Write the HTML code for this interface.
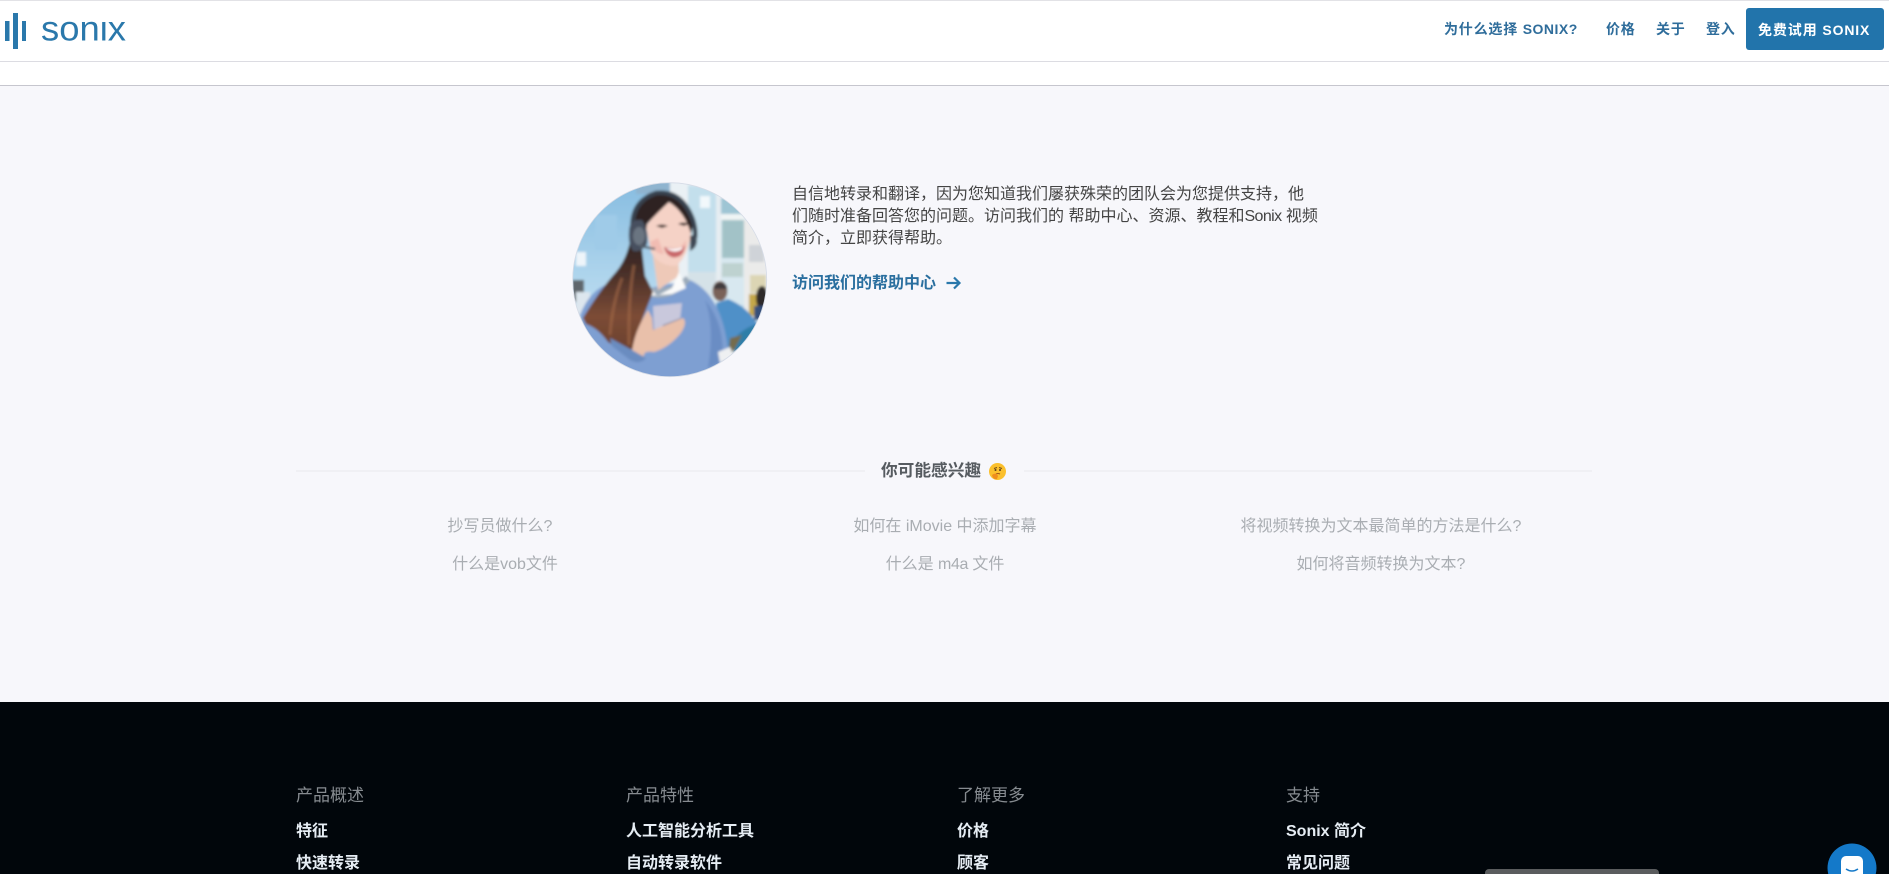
<!DOCTYPE html>
<html lang="zh">
<head>
<meta charset="utf-8">
<title>Sonix</title>
<style>
html,body{margin:0;padding:0;width:1889px;height:874px;overflow:hidden;background:#f7f7fb}
body{position:relative;font-family:"Liberation Sans","Noto Sans CJK SC",sans-serif}
.a{position:absolute;white-space:nowrap;line-height:22px}
.c{transform:translateX(-50%)}
.nav{color:#2f6d9b;font-weight:700;font-size:14px;top:18px;letter-spacing:.8px}
.n{letter-spacing:.5px}
.p{color:#444;font-size:16px;left:792px}
.q{color:#a9adb2;font-size:16px}
.fh{color:#868b90;font-size:17px;top:785px}
.fl{color:#e6edf4;font-weight:700;font-size:16px}
</style>
</head>
<body>
<!-- header -->
<div class="a" style="left:0;top:0;width:1889px;height:85px;background:#fff;border-top:1px solid #e2e2e6;box-sizing:border-box"></div>
<div class="a" style="left:0;top:61px;width:1889px;height:1px;background:#dcdce2"></div>
<div class="a" style="left:0;top:85px;width:1889px;height:1px;background:#c6c6ce"></div>

<svg class="a" style="left:0;top:0" width="140" height="60" viewBox="0 0 140 60">
  <text x="41" y="40.500" font-family="Liberation Sans" font-size="35" fill="#2a78ab" textLength="85" lengthAdjust="spacingAndGlyphs">sonix</text>
  <rect x="30" y="2" width="105" height="19.500" fill="#fff"/>
  <rect x="5" y="21" width="4.500" height="20" fill="#2a78ab"/>
  <rect x="13" y="13" width="5" height="36" fill="#2a78ab"/>
  <rect x="22" y="21" width="4" height="20" fill="#2a78ab"/>
</svg>

<span class="a nav" style="left:1444px">为什么选择 <span class="n">SONIX?</span></span>
<span class="a nav" style="left:1606px">价格</span>
<span class="a nav" style="left:1656px">关于</span>
<span class="a nav" style="left:1706px">登入</span>
<div class="a" style="left:1746px;top:8px;width:138px;height:42px;background:#2274ab;border-radius:3px"></div>
<span class="a" style="left:1758px;top:19px;color:#fff;font-weight:700;font-size:14px;letter-spacing:.9px">免费试用 <span style="letter-spacing:.85px">SONIX</span></span>

<!-- photo -->
<svg class="a" style="left:550px;top:160px" width="240" height="240" viewBox="0 0 240 240">
  <defs>
    <clipPath id="cp"><circle cx="119.7" cy="119.7" r="97"/></clipPath>
    <filter id="b" x="-10%" y="-10%" width="120%" height="120%"><feGaussianBlur stdDeviation="1.300"/></filter>
    <linearGradient id="w" x1="0" y1="0" x2="0" y2="1"><stop offset="0" stop-color="#86bce0"/><stop offset=".55" stop-color="#b4d8ee"/><stop offset=".8" stop-color="#d8e7f0"/></linearGradient>
    <linearGradient id="h" x1="0" y1="0" x2="0" y2="1"><stop offset="0" stop-color="#2a2120"/><stop offset=".35" stop-color="#4a3029"/><stop offset=".7" stop-color="#7c4c36"/><stop offset="1" stop-color="#6a3f2d"/></linearGradient>
  </defs>
  <g clip-path="url(#cp)"><g filter="url(#b)">
    <rect x="20" y="20" width="200" height="200" fill="url(#w)"/>
    <rect x="86" y="22" width="34" height="12" fill="#8fb4cf"/>
    <rect x="45" y="55" width="22" height="35" fill="#9fcbe8"/>
    <rect x="26" y="92" width="10" height="14" fill="#eef5fa"/>
    <!-- right of head -->
    <rect x="120" y="20" width="100" height="125" fill="#d8e8f0"/>
    <rect x="120" y="22" width="18" height="110" fill="#eaf1f5"/>
    <rect x="138" y="26" width="28" height="90" fill="#c3dfec"/>
    <rect x="150" y="36" width="10" height="12" fill="#f2f8fb"/>
    <rect x="138" y="112" width="34" height="25" fill="#d5e2e8"/>
    <rect x="166" y="22" width="5" height="115" fill="#e6edf2"/>
    <rect x="171" y="38" width="22" height="16" fill="#9ec5d4"/>
    <rect x="171" y="54" width="24" height="6" fill="#f0f4f5"/>
    <rect x="172" y="60" width="22" height="38" fill="#a2c2c7"/>
    <rect x="172" y="103" width="21" height="14" fill="#bed2d0"/>
    <rect x="194" y="60" width="26" height="100" fill="#ebebea"/>
    <rect x="199" y="85" width="15" height="17" fill="#cfd3d8"/>
    <rect x="200" y="115" width="16" height="18" fill="#dcd5b4"/>
    <rect x="199" y="134" width="10" height="22" fill="#c5a84a"/>
    <path d="M22 120h12v22h-12z" fill="#5f666c"/>
    <path d="M26 132h14v22h-14z" fill="#dde6ee"/>
    <!-- background man -->
    <ellipse cx="170" cy="131" rx="7.500" ry="10" fill="#7a6258"/>
    <path d="M164 126q6-7 13 0l0 3h-13z" fill="#3f3a3c"/>
    <path d="M166 143l12-4q20 8 30 26l-12 6-10 10-6 10-8-8z" fill="#4f90c8"/>
    <path d="M183 180q10-12 24-16l3 30-24 10z" fill="#2f7ea8"/>
    <ellipse cx="212" cy="138" rx="6" ry="12" fill="#2e2a2c"/>
    <path d="M204 146h14v14h-14z" fill="#35507a"/>
    <path d="M180 178l12-3-8 15-6 8z" fill="#746c4e"/>
    <!-- sweater -->
    <path d="M30 155Q40 130 58 124L100 128L140 120Q172 135 178 190L182 205L150 220L90 222L60 200L34 172Z" fill="#7e9fd2"/>
    <path d="M93 134Q118 146 140 121L136 116Q120 132 96 127Z" fill="#9cabba"/>
    <path d="M155 140Q165 165 158 208l14-6Q176 165 155 140Z" fill="#6a8dc4"/>
    <!-- neck/collar -->
    <path d="M103 96L128 92L129 116L108 130Z" fill="#eec9b8"/>
    <path d="M93 118L107 136L122 128L129 112L136 128L122 134L97 136Z" fill="#fbfbfb"/>
    <!-- hair -->
    <path d="M82 72Q78 98 66 112Q50 130 33 158L36 164Q48 168 58 182L76 192L88 186L92 160L103 132L95 116L92 90Z" fill="url(#h)"/>
    <path d="M72 118Q62 145 60 175M84 105Q78 140 79 185" stroke="#a56b48" stroke-width="3" fill="none" opacity=".6"/>
    <!-- face -->
    <path d="M96 66Q108 50 118 42Q135 48 141 72Q139 95 126 106Q108 106 101 92Z" fill="#f5d2c6"/>
    <path d="M100 82q4 12 14 12l-6-16zM136 80l-6 8 6-1z" fill="#eeb0a8" opacity=".65"/>
    <path d="M84 74Q82 38 112 33Q136 33 143 64L141 74Q135 52 119 42Q108 52 97 64L95 80L92 80Z" fill="#2e2422"/>
    <path d="M106 66q6-3 12 0l-6 2zM128 64q5-3 11 0l-5 2z" fill="#4a3a36"/>
    <path d="M114 87q12 3 21-1q-1 11-11 11.500q-8-1-10-10.500z" fill="#c9686a"/>
    <path d="M116 88q8 2 17-1q-1 4-8 4.500q-6-.5-9-3.500z" fill="#fff"/>
    <!-- headset -->
    <path d="M83 74Q79 42 106 33Q132 30 143 60Q146 70 145 78" fill="none" stroke="#394250" stroke-width="4.500"/>
    <path d="M79 72q0-11 8-12l5 0q7 10 5 24q-6 9-14 7q-5-7-4-19z" fill="#47505e"/>
    <ellipse cx="89" cy="76" rx="6" ry="9" fill="#6b7581"/>
    <path d="M140 76q6-3 7 4q0 8-7 11z" fill="#3f4855"/>
    <path d="M90 86l15 3" stroke="#56606b" stroke-width="2.200"/>
    <!-- phone + hand -->
    <path d="M103 146l29-3l-2 18l-17 7l-9 1z" fill="#c9c8dc"/>
    <path d="M113 166l18-7" stroke="#6a7a9c" stroke-width="2"/>
    <path d="M82 192Q84 172 98 150l4 8l1 12l30-12q5 5-3 16q-12 14-26 18Q92 190 94 198Q86 200 82 192Z" fill="#e9c0aa"/>
    <path d="M60 178L82 190L96 198Q90 205 80 200L62 186Z" fill="#6a8cc0"/>
    <path d="M168 192l12-5l4 10l-14 6z" fill="#eef0f2"/>
  </g></g>
  <circle cx="119.7" cy="119.7" r="97" fill="none" stroke="#d5dbe6" stroke-width=".8"/>
</svg>

<!-- paragraph -->
<span class="a p" style="top:184px">自信地转录和翻译，因为您知道我们屡获殊荣的团队会为您提供支持，他</span>
<span class="a p" style="top:206px">们随时准备回答您的问题。访问我们的 帮助中心、资源、教程和<span style="letter-spacing:-.6px">Sonix</span> 视频</span>
<span class="a p" style="top:228px">简介，立即获得帮助。</span>
<span class="a" style="left:792px;top:273px;color:#2a6f9f;font-weight:700;font-size:16px">访问我们的帮助中心</span>
<svg class="a" style="left:945px;top:275px" width="17" height="16" viewBox="0 0 17 16"><path d="M1.500 8H14M9 2.500L14.500 8L9 13.500" fill="none" stroke="#2a78ab" stroke-width="2.200"/></svg>

<!-- divider -->
<div class="a" style="left:296px;top:470px;width:569px;height:2px;background:#f0f0f4"></div>
<div class="a" style="left:1024px;top:470px;width:568px;height:2px;background:#f0f0f4"></div>
<span class="a" style="left:881px;top:460px;color:#565b60;font-weight:700;font-size:16.700px">你可能感兴趣</span>
<svg class="a" style="left:988px;top:462px" width="19" height="19" viewBox="0 0 19 19">
  <circle cx="9.500" cy="9.500" r="8.500" fill="#fbc02d"/>
  <path d="M6 6.500l3-1M11 5.500l3 1" stroke="#6b4a1e" stroke-width="1" fill="none"/>
  <circle cx="7.500" cy="8" r="1" fill="#5a3d1a"/><circle cx="12" cy="8" r="1" fill="#5a3d1a"/>
  <path d="M8 12q2-1 4 0" stroke="#a2561a" fill="none"/>
  <path d="M4 13q2-2 5-1l1 2-1 3q-4 1-5-4z" fill="#ef8e1c"/>
</svg>

<!-- links -->
<span class="a q c" style="left:500px;top:516px">抄写员做什么?</span>
<span class="a q c" style="left:505px;top:554px">什么是vob文件</span>
<span class="a q c" style="left:945px;top:516px">如何在 iMovie 中添加字幕</span>
<span class="a q c" style="left:945px;top:554px">什么是 <span style="letter-spacing:-.4px">m4a</span> 文件</span>
<span class="a q c" style="left:1381px;top:516px">将视频转换为文本最简单的方法是什么?</span>
<span class="a q c" style="left:1381px;top:554px">如何将音频转换为文本?</span>

<!-- footer -->
<div class="a" style="left:0;top:702px;width:1889px;height:172px;background:#01060b"></div>
<span class="a fh" style="left:296px">产品概述</span>
<span class="a fh" style="left:626px">产品特性</span>
<span class="a fh" style="left:957px">了解更多</span>
<span class="a fh" style="left:1286px">支持</span>
<span class="a fl" style="left:296px;top:821px">特征</span>
<span class="a fl" style="left:296px;top:853px">快速转录</span>
<span class="a fl" style="left:626px;top:821px">人工智能分析工具</span>
<span class="a fl" style="left:626px;top:853px">自动转录软件</span>
<span class="a fl" style="left:957px;top:821px">价格</span>
<span class="a fl" style="left:957px;top:853px">顾客</span>
<span class="a fl" style="left:1286px;top:821px">Sonix 简介</span>
<span class="a fl" style="left:1286px;top:853px">常见问题</span>

<div class="a" style="left:1485px;top:869px;width:174px;height:10px;background:#5a5c5e;border-radius:4px 4px 0 0"></div>
<svg class="a" style="left:1826px;top:842px" width="52" height="32" viewBox="0 0 52 32">
  <circle cx="26" cy="26" r="24.500" fill="#1479c9"/>
  <rect x="15" y="14" width="22" height="24" rx="5" fill="#fff"/>
  <path d="M20 27q6 4 12 0" fill="none" stroke="#1479c9" stroke-width="1.500"/>
</svg>
</body>
</html>
